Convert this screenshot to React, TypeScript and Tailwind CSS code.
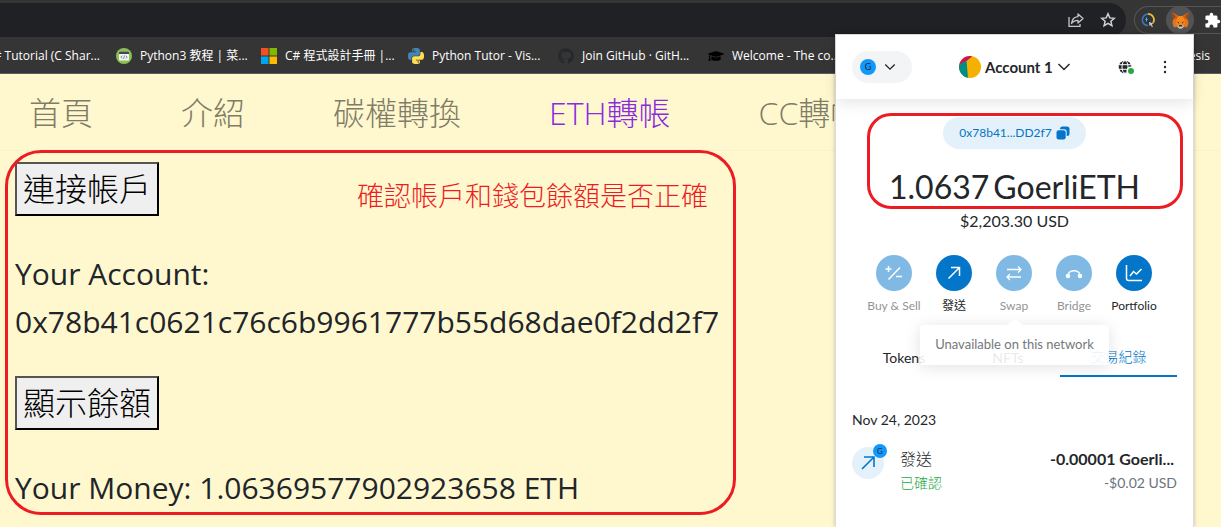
import type { ReactNode } from "react";
import { FaGithub, FaGraduationCap } from "react-icons/fa";
import { MdExtension } from "react-icons/md";

const PYTHON_HALF =
  "M14.25.18l.9.2.73.26.59.3.45.32.34.34.25.34.16.33.1.3.04.26.02.2-.01.13V8.5l-.05.63-.13.55-.21.46-.26.38-.3.31-.33.25-.35.19-.35.14-.33.1-.3.07-.26.04-.21.02H8.77l-.69.05-.59.14-.5.22-.41.27-.33.32-.27.35-.2.36-.15.37-.1.35-.07.32-.04.27-.02.21v3.06H3.17l-.21-.03-.28-.07-.32-.12-.35-.18-.36-.26-.36-.36-.35-.46-.32-.59-.28-.73-.21-.88-.14-1.05-.05-1.23.06-1.22.16-1.04.24-.87.32-.71.36-.57.4-.44.42-.33.42-.24.4-.16.36-.1.32-.05.24-.01h.16l.06.01h8.16v-.83H6.18l-.01-2.75-.02-.37.05-.34.11-.31.17-.28.25-.26.31-.23.38-.2.44-.18.51-.15.58-.12.64-.1.71-.06.77-.04.84-.02 1.27.05zm-6.3 1.98l-.23.33-.08.41.08.41.23.34.33.22.41.09.41-.09.33-.22.23-.34.08-.41-.08-.41-.23-.33-.33-.22-.41-.09-.41.09z";

function PythonLogo() {
  return (
    <svg viewBox="0 0 24 24" className="size-4">
      <path d={PYTHON_HALF} fill="#4584b6" />
      <path d={PYTHON_HALF} fill="#ffde57" transform="rotate(180 12 12)" />
    </svg>
  );
}

function RunoobLogo() {
  return (
    <svg viewBox="0 0 16 16" className="size-4">
      <circle cx="8" cy="8" r="8" fill="#8cc152" />
      <rect x="3" y="3.500" width="10" height="9" rx="1" fill="#f4f4f4" />
      <path d="M3 6V4.500a1 1 0 0 1 1-1h8a1 1 0 0 1 1 1V6z" fill="#3c4a57" />
      <path d="M6.200 7.700 4.800 9.100l1.400 1.400M9.800 7.700l1.400 1.400-1.400 1.400M8.500 7.500l-1 3.200" fill="none" stroke="#667" strokeWidth=".8" />
    </svg>
  );
}

function WindowsLogo() {
  return (
    <svg viewBox="0 0 16 16" className="size-4">
      <path fill="#f25022" d="M0 0h7.500v7.500H0z" />
      <path fill="#7fba00" d="M8.500 0H16v7.500H8.500z" />
      <path fill="#00a4ef" d="M0 8.500h7.500V16H0z" />
      <path fill="#ffb900" d="M8.500 8.500H16V16H8.500z" />
    </svg>
  );
}

function FoxLogo() {
  return (
    <svg viewBox="0 0 34 34" className="size-[17px]">
      <path fill="#e2761b" d="M1 1l12 7h8l12-7-1 14 1 8-3 8-7-2-4 4h-4l-4-4-7 2-3-8 1-8z" />
      <path fill="#8f4a1c" d="M1 1l7 8-4 6-2 0zM33 1l-7 8 4 6 2 0z" />
      <path fill="#cd6116" d="M1 1l12 7-3 6-7 1 5-6zM33 1L21 8l3 6 7 1-5-6z" />
      <path fill="#f6851b" d="M13 8h8l4 7 1 9-5 3h-8l-5-3 1-9z" />
      <path fill="#d5bfb2" d="M12 26h10l2 3-4 4h-6l-4-4z" />
      <path fill="#27343f" d="M14 26h6l1 3h-8zM10 19l4 1.500v3zM24 19l-4 1.500v3z" />
    </svg>
  );
}

function SpinnerLogo() {
  return (
    <svg viewBox="0 0 16 16" className="size-4" fill="none">
      <path d="M8 2.200a5.600 5.600 0 1 0 0 11.200" stroke="#3f74c0" strokeWidth="1.800" />
      <path d="M8 1.800a6 6 0 0 1 5 9.200" stroke="#e9b93a" strokeWidth="1.800" />
      <circle cx="8" cy="8" r="4.600" fill="#30343a" />
      <path d="M6.500 5.500v4M5.300 7.500h2.400" stroke="#48b4e8" strokeWidth="1" />
      <path d="M9 10l4.500 1.600-1.700.9 1.100 2.200-1 .5-1.100-2.100-1.300 1z" fill="#ccc" />
    </svg>
  );
}

function ShareIcon() {
  return (
    <svg viewBox="0 0 16 16" className="size-4" fill="none" stroke="#c4c7ca" strokeWidth="1.300">
      <path d="M1 5v9.300h11V12" />
      <path d="M10 2l5 4.500-5 4.500V8.300C7 8.300 5 9.300 3.500 11.500 4 7.500 6 5 10 4.700z" strokeLinejoin="round" />
    </svg>
  );
}

function StarIcon() {
  return (
    <svg viewBox="0 0 16 16" className="size-4" fill="none" stroke="#d0d3d6" strokeWidth="1.500">
      <path d="M8 1.800l1.800 4.100 4.500.4-3.400 3 1 4.400L8 11.400l-3.900 2.300 1-4.400-3.400-3 4.500-.4z" />
    </svg>
  );
}

function Chevron({ className }: { className: string }) {
  return (
    <svg viewBox="0 0 14 14" className={className} fill="none" stroke="#24272a" strokeWidth="1.500">
      <path d="M1.500 4l5.500 5.500L12.500 4" />
    </svg>
  );
}

function AvatarIcon() {
  return (
    <svg viewBox="0 0 22 22" className="size-[22px]">
      <clipPath id="avatar">
        <circle cx="11" cy="11" r="11" />
      </clipPath>
      <g clipPath="url(#avatar)">
        <path fill="#f5b100" d="M0 0h22v22H0z" />
        <path fill="#c8145c" d="M0 9L0 0h13L12.500 1L7.500 5z" />
        <path fill="#018e84" d="M0 9L7.500 4.500 9 22H0z" />
      </g>
    </svg>
  );
}

function GlobeIcon() {
  return (
    <svg viewBox="0 0 17 15" className="h-[15px] w-[17px]">
      <circle cx="7" cy="7" r="6.300" fill="#24272a" />
      <ellipse cx="7" cy="7" rx="3" ry="6.300" fill="none" stroke="#fff" strokeWidth="1" />
      <path d="M0 4.700h14M0 9.300h14" stroke="#fff" strokeWidth="1" />
      <circle cx="13" cy="11" r="4.500" fill="#fff" />
      <circle cx="13" cy="11" r="3" fill="#28a745" />
    </svg>
  );
}

function CopyIcon() {
  return (
    <svg viewBox="0 0 14 14" className="size-3.5" fill="#0376c9">
      <path d="M6.500.5H11a2.500 2.500 0 0 1 2.500 2.500v4.500A2.500 2.500 0 0 1 11 10h-.3V6A2.700 2.700 0 0 0 8 3.300H4V3A2.500 2.500 0 0 1 6.500.5z" />
      <rect x=".5" y="4.300" width="9.200" height="9.200" rx="2.200" />
    </svg>
  );
}

const SANS = "font-['Open_Sans','Noto_Sans_CJK_TC',sans-serif]";
const WALLET = "font-['Lato','Noto_Sans_CJK_TC',sans-serif]";

function Bookmark({ icon, label, width }: { icon: ReactNode; label: string; width: string }) {
  return (
    <a href="#" className={`flex shrink-0 items-center gap-2 ${width}`}>
      {icon}
      <span>{label}</span>
    </a>
  );
}

function Browser() {
  return (
    <header className="bg-[#353535] text-white">
      <div className="flex h-[37px] items-start pt-[3px]">
        <div className="flex h-[34px] flex-1 items-center justify-end gap-4 rounded-r-full bg-[#202124] pr-2.5">
          <button aria-label="Share"><ShareIcon /></button>
          <button aria-label="Bookmark"><StarIcon /></button>
        </div>
        <div className="mt-[3px] ml-2 flex h-7 w-[87px] items-center overflow-hidden rounded-l-full border border-r-0 border-[#555] pl-[5px]">
          <button aria-label="Extension"><SpinnerLogo /></button>
          <button aria-label="Wallet" className="ml-2.5 flex size-7 shrink-0 items-center justify-center rounded-full bg-[#535353]">
            <FoxLogo />
          </button>
          <button aria-label="Extensions" className="ml-2.5 shrink-0"><MdExtension size={17} /></button>
        </div>
      </div>
      <nav className="flex h-[37px] items-center overflow-hidden border-b border-[#5c5c5c] pt-px text-[12px] whitespace-nowrap">
        <a href="#" className="flex w-[100px] shrink-0 justify-end"># Tutorial (C Shar...</a>
        <span className="w-4 shrink-0" />
        <Bookmark icon={<RunoobLogo />} label="Python3 教程 | 菜..." width="w-[145px]" />
        <Bookmark icon={<WindowsLogo />} label="C# 程式設計手冊 |..." width="w-[147px]" />
        <Bookmark icon={<PythonLogo />} label="Python Tutor - Vis..." width="w-[150px]" />
        <Bookmark icon={<FaGithub size={16} color="#24292e" />} label="Join GitHub · GitH..." width="w-[150px]" />
        <Bookmark icon={<FaGraduationCap size={16} color="#000" />} label="Welcome - The co..." width="w-[150px]" />
        <a href="#" className="ml-auto pr-[11px]">Genesis</a>
      </nav>
    </header>
  );
}

const BTN =
  "block border-2 border-t-[#555] border-l-[#555] border-r-black border-b-black bg-[#efefef] px-1.5 py-px text-[32px] leading-12 font-light text-black";

function Page() {
  return (
    <main className="relative flex-1 text-[#212529]">
      <nav className="flex h-[77px] items-center gap-[88px] overflow-hidden border-b border-[#f9f2cb] pt-px pl-[29px] text-[32px] font-light whitespace-nowrap text-[#7f7c67]">
        <a href="#">首頁</a>
        <a href="#">介紹</a>
        <a href="#">碳權轉換</a>
        <a href="#" className="text-[#8a2be2]">ETH轉帳</a>
        <a href="#">CC轉帳</a>
      </nav>
      <section className="px-[15px] pt-[11px] text-[30px] leading-12">
        <button className={BTN}>連接帳戶</button>
        <p className="mt-[34px]">
          Your Account:
          <br />
          0x78b41c0621c76c6b9961777b55d68dae0f2dd2f7
        </p>
        <button className={`mt-[30px] ${BTN}`}>顯示餘額</button>
        <p className="mt-[34px]">Your Money: 1.06369577902923658 ETH</p>
      </section>
      <div className="absolute top-[76px] left-[5px] h-[365px] w-[731px] rounded-[36px] border-3 border-[#ed1c24]" />
      <p className="absolute top-[102px] left-[357px] text-[27px] leading-10 font-light whitespace-nowrap text-[#ed1c24]">
        確認帳戶和錢包餘額是否正確
      </p>
    </main>
  );
}

function Action({ label, active, children }: { label: string; active?: boolean; children: ReactNode }) {
  return (
    <button className={`flex w-[60px] flex-col items-center gap-1.5 text-[12px] leading-[18px] whitespace-nowrap text-[#24272a] ${active ? "" : "opacity-50"}`}>
      <span className="flex size-9 items-center justify-center rounded-full bg-[#0376c9]">
        <svg viewBox="0 0 20 20" className="size-5" fill="none" stroke="#fff" strokeWidth="1.500">
          {children}
        </svg>
      </span>
      {label}
    </button>
  );
}

function Wallet() {
  return (
    <aside className={`absolute top-[34px] right-[27px] bottom-0 w-[359px] border border-b-0 border-[#dbdde0] bg-white text-[#24272a] shadow-[0_0_4px_rgba(0,0,0,0.25)] ${WALLET}`}>
      <div className="flex h-16 items-center px-4 shadow-[0_4px_14px_rgba(0,0,0,0.1)]">
        <button aria-label="Network" className="flex h-8 w-15 items-center gap-2 rounded-full bg-[#f2f4f6] pl-2">
          <span className="flex size-4 items-center justify-center rounded-full bg-[#1098fc] text-[9px]">G</span>
          <Chevron className="size-3" />
        </button>
        <button className="ml-[47px] flex items-center gap-1 text-[15px] font-bold whitespace-nowrap">
          <AvatarIcon />
          Account 1
          <Chevron className="size-3.5" />
        </button>
        <button aria-label="Connected sites" className="ml-auto"><GlobeIcon /></button>
        <button aria-label="Menu" className="ml-7 pr-2.5">
          <svg viewBox="0 0 4 14" className="h-3.5 w-1" fill="#24272a">
            <circle cx="2" cy="2" r="1.200" />
            <circle cx="2" cy="7" r="1.200" />
            <circle cx="2" cy="12" r="1.200" />
          </svg>
        </button>
      </div>
      <div className="flex flex-col items-center pt-[18px]">
        <button className="flex h-8 items-center gap-1 rounded-full bg-[#e5f1fa] px-4 text-[12px] text-[#0376c9]">
          0x78b41...DD2f7
          <CopyIcon />
        </button>
        <p className="mt-[18px] flex gap-1 text-[32px] leading-10">
          <span>1.0637</span>
          <span>GoerliETH</span>
        </p>
        <p className="text-[16px] leading-7">$2,203.30 USD</p>
      </div>
      <div className="mt-5 flex pl-7">
        <Action label="Buy & Sell">
          <path d="M1.500 6h6M4.500 3v6M4.500 16.500L16 4.500M12 13.500h6" />
        </Action>
        <Action label="發送" active>
          <path d="M4.500 15.500l11-11M7 4.500h8.500V13" />
        </Action>
        <Action label="Swap">
          <path d="M3 6.500h14M14 3.500l3 3-3 3M17 14H3M6 11l-3 3 3 3" strokeWidth="1.300" />
        </Action>
        <Action label="Bridge">
          <path d="M4 12.500C4.500 6 15.500 6 16 12.500" />
          <circle cx="4" cy="13" r="1.500" fill="#fff" />
          <circle cx="16" cy="13" r="1.500" fill="#fff" />
        </Action>
        <Action label="Portfolio" active>
          <path d="M2.500 2v13.500a2 2 0 0 0 2 2H18M6 13l3.500-4.500 3 2.500L17.500 6" />
        </Action>
      </div>
      <div className="relative mt-[23px] px-4">
        <div className="flex justify-between text-[14px] leading-5">
          <button className="h-[39px] w-[104px]">Tokens</button>
          <button className="h-[39px] w-[104px]">NFTs</button>
          <button className="h-[39px] w-[117px] border-b-2 border-[#0376c9] font-light text-[#0376c9]">交易紀錄</button>
        </div>
        <div role="tooltip" className="absolute -top-[13px] left-[84px] flex h-10 w-[189px] items-center justify-center rounded bg-white/90 text-[13px] whitespace-nowrap text-[#75787b] shadow-[0_2px_16px_rgba(0,0,0,0.12)]">
          Unavailable on this network
          <svg viewBox="0 0 16 6" className="absolute -top-1.5 left-[87px] h-1.5 w-4">
            <path d="M0 6l8-6 8 6z" fill="#fff" />
          </svg>
        </div>
      </div>
      <div className="px-4 pt-8">
        <h2 className="text-[14px] leading-[22px]">Nov 24, 2023</h2>
        <div className="mt-4 flex items-start gap-4">
          <div className="relative flex size-8 items-center justify-center rounded-full bg-[#e5f1fa]">
            <svg viewBox="0 0 16 16" className="size-4" fill="none" stroke="#0376c9" strokeWidth="1.600">
              <path d="M2 14L14 2M4 2h10v10" />
            </svg>
            <span className="absolute -top-[3px] -right-[3px] flex size-3.5 items-center justify-center rounded-full bg-[#1098fc] text-[8px]">G</span>
          </div>
          <div className="flex-1">
            <div className="flex items-center justify-between text-[16px] leading-6">
              <span className="font-light">發送</span>
              <span className="pr-[3px] font-bold">-0.00001 Goerli...</span>
            </div>
            <div className="flex items-center justify-between text-[14px] leading-6">
              <span className="font-light text-[#28a745]">已確認</span>
              <span className="text-[#6a737d]">-$0.02 USD</span>
            </div>
          </div>
        </div>
      </div>
    </aside>
  );
}

export default function App() {
  return (
    <div className={`relative flex min-h-screen flex-col overflow-hidden bg-[#fff8cf] ${SANS}`}>
      <Browser />
      <Page />
      <Wallet />
      <div className="absolute top-[113px] right-[38px] h-24 w-[316px] rounded-[24px] border-3 border-[#ed1c24]" />
    </div>
  );
}
